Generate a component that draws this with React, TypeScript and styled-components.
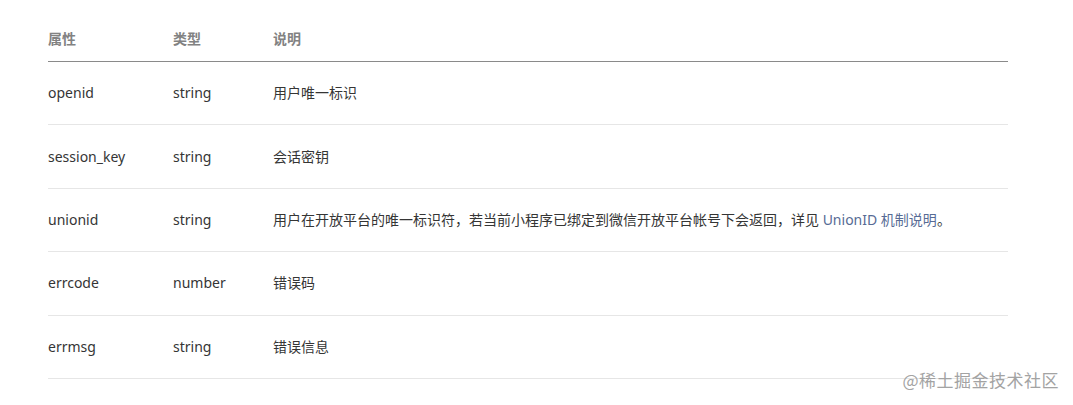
import React from "react";
import styled, { createGlobalStyle } from "styled-components";

const GlobalStyle = createGlobalStyle`
  html, body {
    margin: 0;
    padding: 0;
    background: #ffffff;
  }
  body {
    font-family: "Noto Sans", "Noto Sans CJK SC", sans-serif;
    -webkit-font-smoothing: antialiased;
  }
`;

const StyledPage = styled.div`
  position: relative;
  width: 1073px;
  height: 405px;
  box-sizing: border-box;
  padding: 17px 0 0 48px;
  overflow: hidden;
`;

const StyledTable = styled.div`
  width: 960px;
  display: flex;
  flex-direction: column;
`;

const StyledRow = styled.div<{ $head?: boolean }>`
  display: grid;
  grid-template-columns: 125px 100px 1fr;
  align-items: center;
  box-sizing: border-box;
  height: ${({ $head }) => ($head ? "45px" : "63.4px")};
  border-bottom: 1px solid ${({ $head }) => ($head ? "#8a8a8a" : "#e6e6e6")};
`;

const StyledCell = styled.div<{ $head?: boolean }>`
  font-size: 14px;
  line-height: 20px;
  font-weight: ${({ $head }) => ($head ? 700 : 400)};
  color: ${({ $head }) => ($head ? "#828282" : "#353535")};
  white-space: nowrap;
`;

const StyledLink = styled.a`
  color: #576b95;
  text-decoration: none;
`;

const StyledWatermark = styled.div`
  position: absolute;
  right: 14px;
  bottom: 13px;
  font-size: 17px;
  color: #a3a3a3;
  font-family: "Noto Sans CJK SC", sans-serif;
  letter-spacing: 0.5px;
`;

const ROWS = [
  { name: "openid", type: "string", desc: "用户唯一标识" },
  { name: "session_key", type: "string", desc: "会话密钥" },
  { name: "unionid", type: "string", desc: "" },
  { name: "errcode", type: "number", desc: "错误码" },
  { name: "errmsg", type: "string", desc: "错误信息" },
];

export default function App() {
  return (
    <>
      <GlobalStyle />
      <StyledPage>
        <StyledTable>
          <StyledRow $head>
            <StyledCell $head>属性</StyledCell>
            <StyledCell $head>类型</StyledCell>
            <StyledCell $head>说明</StyledCell>
          </StyledRow>
          {ROWS.map((row) => (
            <StyledRow key={row.name}>
              <StyledCell>{row.name}</StyledCell>
              <StyledCell>{row.type}</StyledCell>
              <StyledCell>
                {row.name === "unionid" ? (
                  <>
                    用户在开放平台的唯一标识符，若当前小程序已绑定到微信开放平台帐号下会返回，详见{" "}
                    <StyledLink href="#">UnionID 机制说明</StyledLink>。
                  </>
                ) : (
                  row.desc
                )}
              </StyledCell>
            </StyledRow>
          ))}
        </StyledTable>
        <StyledWatermark>@稀土掘金技术社区</StyledWatermark>
      </StyledPage>
    </>
  );
}
